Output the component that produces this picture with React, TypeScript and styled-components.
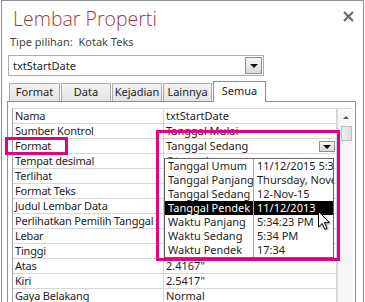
import styled, { createGlobalStyle } from "styled-components";

const GlobalStyle = createGlobalStyle`
  body {
    margin: 0;
    background: #ffffff;
    font-family: "Noto Sans", "Open Sans", sans-serif;
  }
`;

const Page = styled.div`
  position: relative;
  width: 365px;
  height: 302px;
  overflow: hidden;
  padding-left: 1px;
  box-sizing: border-box;
`;

const Window = styled.section`
  width: 363px;
  height: 310px;
  box-sizing: border-box;
  border: 1px solid #8e8e8e;
  background: #fff;
`;

const Header = styled.header`
  display: flex;
  justify-content: space-between;
  align-items: flex-start;
  padding: 4px 9px 0 11px;
`;

const Title = styled.h1`
  margin: 0;
  font-family: "Open Sans", sans-serif;
  font-weight: 300;
  font-size: 19.5px;
  line-height: 28px;
  color: #a4373a;
`;

const Close = styled.svg`
  margin-top: 6px;
`;

const Subtitle = styled.div`
  margin: 1px 0 0 8px;
  font-size: 11px;
  line-height: 16px;
  color: #444;
  white-space: pre;
`;

const Combo = styled.div`
  display: flex;
  align-items: center;
  justify-content: space-between;
  margin: 5px 0 0 6px;
  width: 256px;
  height: 21px;
  box-sizing: border-box;
  border: 1px solid #ababab;
  padding: 0 1px 0 4px;
  font-size: 11px;
  color: #1e1e1e;
`;

const DropButton = styled.span<{ $small?: boolean }>`
  display: flex;
  align-items: center;
  justify-content: center;
  width: ${(p) => (p.$small ? 16 : 17)}px;
  height: ${(p) => (p.$small ? 11 : 17)}px;
  box-sizing: border-box;
  border: 1px solid #8f8f8f;
  background: linear-gradient(#f6f6f6, #dadada);
  &::after {
    content: "";
    border-left: 4px solid transparent;
    border-right: 4px solid transparent;
    border-top: 4px solid #111;
    margin-top: ${(p) => (p.$small ? 2 : 1)}px;
  }
`;

const Tabs = styled.nav`
  display: flex;
  align-items: flex-end;
  gap: 1px;
  margin: 5px 0 0 7px;
`;

const Tab = styled.div<{ $active?: boolean; $w: number }>`
  width: ${(p) => p.$w}px;
  height: ${(p) => (p.$active ? 21 : 18)}px;
  box-sizing: border-box;
  border: 1px solid ${(p) => (p.$active ? "#8e8e8e" : "#acacac")};
  border-bottom: none;
  margin-bottom: ${(p) => (p.$active ? -1 : 0)}px;
  position: relative;
  z-index: ${(p) => (p.$active ? 1 : 0)};
  background: ${(p) => (p.$active ? "#fff" : "linear-gradient(#f2f2f2, #e3e3e3)")};
  text-align: center;
  font-size: 11px;
  line-height: ${(p) => (p.$active ? 17 : 16)}px;
  color: #1e1e1e;
`;

const Panel = styled.div`
  display: flex;
  align-items: flex-start;
  margin-left: 5px;
  width: 349px;
  height: 220px;
  box-sizing: border-box;
  border: 1px solid #8e8e8e;
  border-bottom: none;
  padding: 6px 2px 0 4px;
`;

const Grid = styled.div`
  width: 325px;
  box-sizing: border-box;
  border-left: 1px solid #a0a0a0;
  border-top: 1px solid #d6d6d6;
  border-right: 1px solid #d6d6d6;
`;

const Row = styled.div`
  display: flex;
  height: 15px;
  box-sizing: border-box;
  border-bottom: 1px solid #d6d6d6;
  font-size: 11px;
  line-height: 14px;
  color: #1e1e1e;
`;

const Label = styled.div`
  width: 151px;
  flex: none;
  box-sizing: border-box;
  border-right: 1px solid #d6d6d6;
  padding-left: 2px;
  letter-spacing: -0.2px;
  white-space: nowrap;
`;

const Value = styled.div`
  flex: 1;
  display: flex;
  align-items: center;
  justify-content: space-between;
  padding: 0 1px 0 2px;
  white-space: nowrap;
  overflow: hidden;
`;

const Scrollbar = styled.div`
  width: 16px;
  height: 200px;
  box-sizing: border-box;
  border-left: 1px solid #dcdcdc;
  border-top: 1px solid #dcdcdc;
  background: #f6f6f6;
  display: flex;
  flex-direction: column;
  align-items: center;
`;

const ScrollArrow = styled.span`
  margin-top: 7px;
  border-left: 3px solid transparent;
  border-right: 3px solid transparent;
  border-bottom: 3px solid #555;
`;

const Thumb = styled.span`
  margin: 7px 0 0 2px;
  width: 11px;
  height: 15px;
  box-sizing: border-box;
  border: 1px solid #bdbdbd;
  background: linear-gradient(90deg, #f0f0f0, #dedede);
`;

const Highlight = styled.div<{ $x: number; $y: number; $w: number; $h: number }>`
  position: absolute;
  left: ${(p) => p.$x}px;
  top: ${(p) => p.$y}px;
  width: ${(p) => p.$w}px;
  height: ${(p) => p.$h}px;
  box-sizing: border-box;
  border: 3px solid #e5007d;
  z-index: 3;
`;

const List = styled.div`
  position: absolute;
  left: 164px;
  top: 158px;
  width: 170px;
  box-sizing: border-box;
  border: 1px solid #646464;
  background: #fff;
  z-index: 2;
`;

const ListRow = styled.div<{ $selected?: boolean }>`
  display: flex;
  height: 14px;
  font-size: 11px;
  line-height: 14px;
  background: ${(p) => (p.$selected ? "#000" : "#fff")};
  color: ${(p) => (p.$selected ? "#fff" : "#1e1e1e")};
`;

const ListName = styled.span`
  width: 89px;
  flex: none;
  box-sizing: border-box;
  border-right: 1px solid #a8a8a8;
  padding-left: 3px;
  white-space: nowrap;
  overflow: hidden;
`;

const ListSample = styled.span`
  flex: 1;
  padding-left: 3px;
  white-space: nowrap;
  overflow: hidden;
`;

const Cursor = styled.svg`
  position: absolute;
  left: 318px;
  top: 211px;
  z-index: 4;
  filter: drop-shadow(1px 1px 1px rgba(0, 0, 0, 0.35));
`;

const tabs = [
  { name: "Format", w: 51 },
  { name: "Data", w: 50 },
  { name: "Kejadian", w: 50 },
  { name: "Lainnya", w: 49 },
  { name: "Semua", w: 53, active: true },
];

// values of rows hidden by the open list are left empty
const rows: [string, string][] = [
  ["Nama", "txtStartDate"],
  ["Sumber Kontrol", "Tanggal Mulai"],
  ["Format", "Tanggal Sedang"],
  ["Tempat desimal", "Otomatis"],
  ["Terlihat", ""],
  ["Format Teks", ""],
  ["Judul Lembar Data", ""],
  ["Perlihatkan Pemilih Tanggal", ""],
  ["Lebar", ""],
  ["Tinggi", ""],
  ["Atas", "2.4167\""],
  ["Kiri", "2.5417\""],
  ["Gaya Belakang", "Normal"],
];

const formats = [
  ["Tanggal Umum", "11/12/2015 5:34:23 PM"],
  ["Tanggal Panjang", "Thursday, November 12, 2015"],
  ["Tanggal Sedang", "12-Nov-15"],
  ["Tanggal Pendek", "11/12/2013"],
  ["Waktu Panjang", "5:34:23 PM"],
  ["Waktu Sedang", "5:34 PM"],
  ["Waktu Pendek", "17:34"],
];

export default function App() {
  return (
    <Page>
      <GlobalStyle />
      <Window>
        <Header>
          <Title>Lembar Properti</Title>
          <Close width="11" height="11" viewBox="0 0 11 11">
            <path d="M1 1 L10 10 M10 1 L1 10" stroke="#6b6b6b" strokeWidth="2.2" />
          </Close>
        </Header>
        <Subtitle>Tipe pilihan:  Kotak Teks</Subtitle>
        <Combo>
          txtStartDate
          <DropButton />
        </Combo>
        <Tabs>
          {tabs.map((t) => (
            <Tab key={t.name} $w={t.w} $active={t.active}>
              {t.name}
            </Tab>
          ))}
        </Tabs>
        <Panel>
          <Grid>
            {rows.map(([label, value], i) => (
              <Row key={label}>
                <Label>{label}</Label>
                <Value>
                  {value}
                  {i === 2 && <DropButton $small />}
                </Value>
              </Row>
            ))}
          </Grid>
          <Scrollbar>
            <ScrollArrow />
            <Thumb />
          </Scrollbar>
        </Panel>
      </Window>

      <List>
        {formats.map(([name, sample], i) => (
          <ListRow key={name} $selected={i === 3}>
            <ListName>{name}</ListName>
            <ListSample>{sample}</ListSample>
          </ListRow>
        ))}
      </List>
      <Highlight $x={156} $y={130} $w={184} $h={131} />
      <Highlight $x={5} $y={137} $w={63} $h={18} />
      <Cursor width="13" height="20" viewBox="0 0 13 20">
        <path
          d="M0.5 0.5 L0.5 16 L4.2 12.4 L6.8 18.4 L9 17.4 L6.5 11.6 L11.5 11.6 Z"
          fill="#fff"
          stroke="#000"
          strokeWidth="1"
          strokeLinejoin="round"
        />
      </Cursor>
    </Page>
  );
}
